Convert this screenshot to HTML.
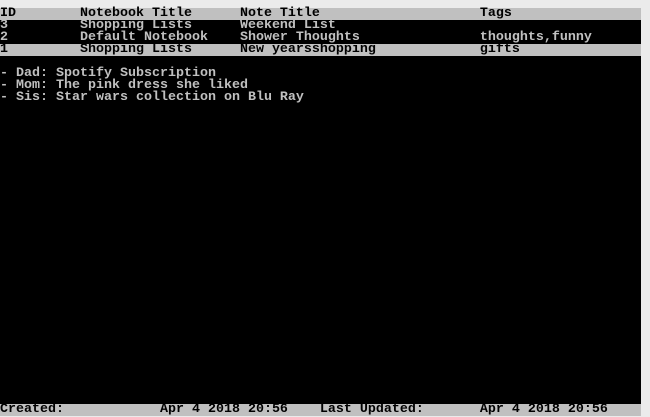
<!DOCTYPE html>
<html><head><style>
html,body{margin:0;padding:0;width:650px;height:415px;overflow:hidden;background:#ebebeb}
#t{position:absolute;left:0;top:8px;width:641px;height:407px;background:#000}
.r{position:absolute;left:0;width:641px;height:12px;font:bold 13.33px/12px "Liberation Mono",monospace;color:#c0c0c0;white-space:pre;letter-spacing:0}
.g{background:#c0c0c0;color:#000}
</style></head><body>
<div id="t"></div>
<div class="r g" style="top:8px">ID        Notebook Title      Note Title                    Tags</div>
<div class="r" style="top:20px">3         Shopping Lists      Weekend List</div>
<div class="r" style="top:32px">2         Default Notebook    Shower Thoughts               thoughts,funny</div>
<div class="r g" style="top:44px">1         Shopping Lists      New yearsshopping             gifts</div>
<div class="r" style="top:68px">- Dad: Spotify Subscription</div>
<div class="r" style="top:80px">- Mom: The pink dress she liked</div>
<div class="r" style="top:92px">- Sis: Star wars collection on Blu Ray</div>
<div class="r g" style="top:404px">Created:            Apr 4 2018 20:56    Last Updated:       Apr 4 2018 20:56</div>
</body></html>
